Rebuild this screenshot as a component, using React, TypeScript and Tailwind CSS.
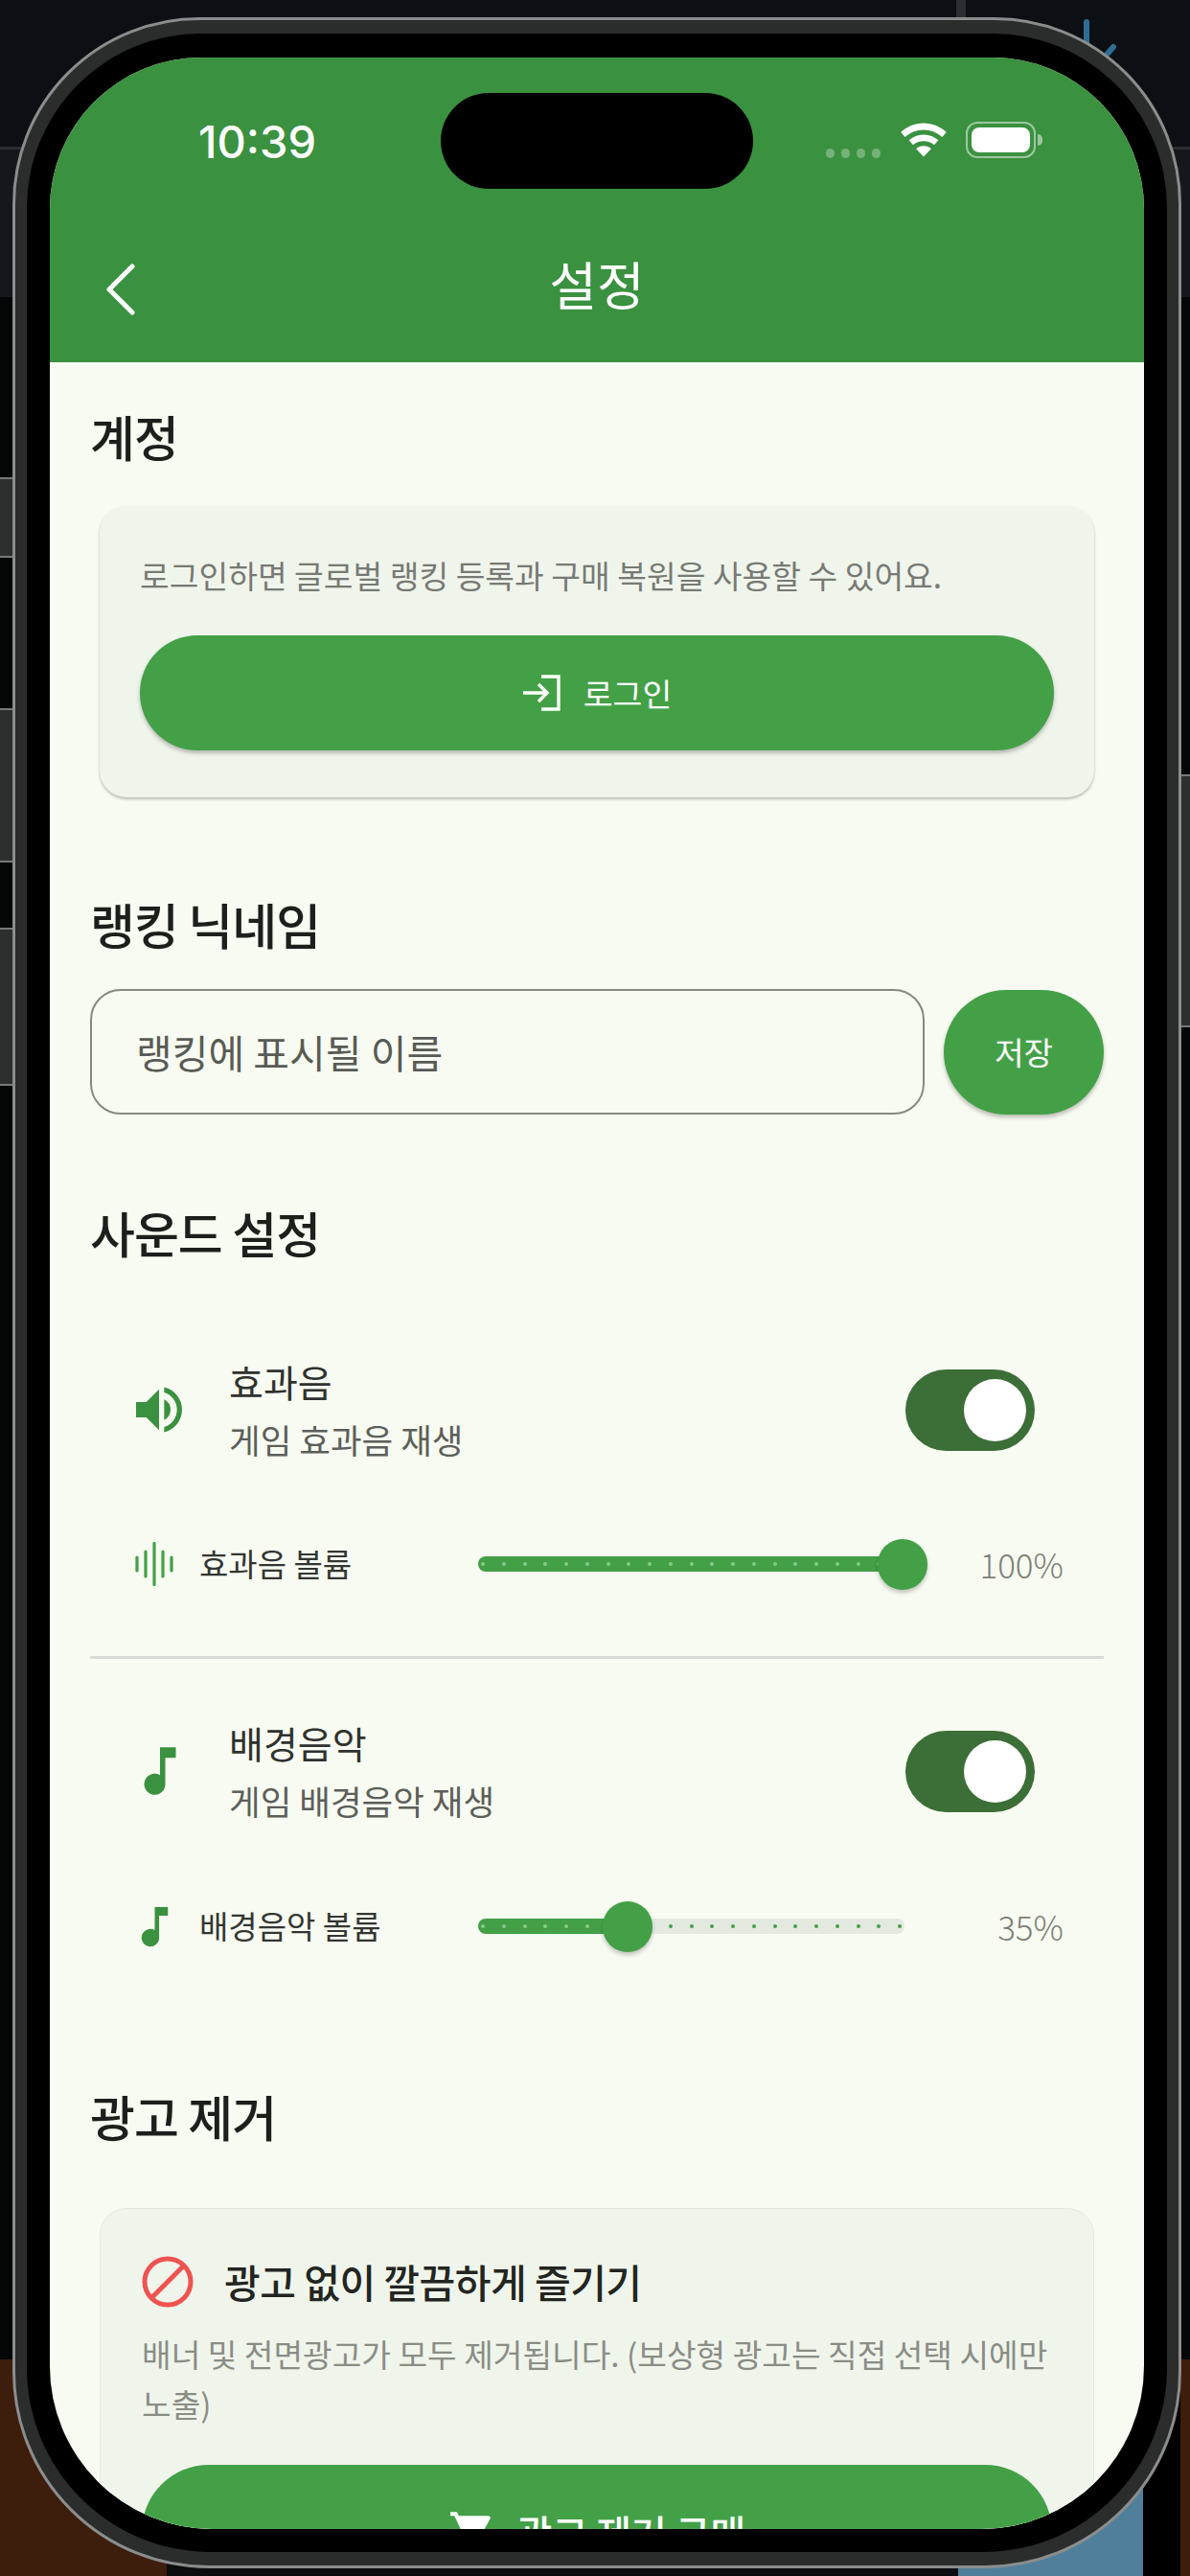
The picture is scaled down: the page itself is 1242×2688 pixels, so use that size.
import React from 'react';

const FONT = "font-['Noto_Sans_CJK_KR','Noto_Sans',sans-serif]";

const SpeakerIcon = ({ className }: { className: string }) => (
  <svg viewBox="0 0 24 24" className={className} fill="currentColor">
    <path d="M3 9v6h4l5 5V4L7 9H3zm13.500 3A4.500 4.500 0 0 0 14 7.970v8.050A4.500 4.500 0 0 0 16.500 12zM14 3.230v2.060a7 7 0 0 1 0 13.420v2.060a9 9 0 0 0 0-17.540z" />
  </svg>
);

const NoteIcon = ({ className }: { className: string }) => (
  <svg viewBox="0 0 24 24" className={className} fill="currentColor">
    <path d="M12 3v10.550A4 4 0 1 0 14 17V7h4V3h-6z" />
  </svg>
);

const WaveIcon = ({ className }: { className: string }) => (
  <svg viewBox="0 0 40 46" className={className} stroke="currentColor" strokeWidth="3.200" strokeLinecap="round">
    <path d="M2 16v14M11 10v26M20 1.500v43M29 10v26M38 16v14" />
  </svg>
);

const WifiIcon = () => (
  <svg viewBox="0 0 40 30" className="h-[38px] w-[50px]" fill="white">
    <path d="M20 1C12.500 1 6 4 1 8.500l3.500 4C8.500 9 14 6.500 20 6.500S31.500 9 35.500 12.500l3.500-4C34 4 27.500 1 20 1z" />
    <path d="M20 10.500c-4.800 0-9 1.800-12.300 4.700l3.500 4c2.300-2 5.300-3.200 8.800-3.200s6.500 1.200 8.800 3.200l3.500-4C29 12.300 24.800 10.500 20 10.500z" />
    <path d="M20 20c-2.500 0-4.700.9-6.300 2.300L20 29l6.300-6.700C24.700 20.900 22.500 20 20 20z" />
  </svg>
);

const LoginIcon = () => (
  <svg viewBox="0 0 40 38" className="h-[38px] w-[40px]" fill="none" stroke="white" strokeWidth="3.400">
    <path d="M20 2h18v34H20" />
    <path d="M1 19h25M17 10l9 9-9 9" />
  </svg>
);

const CartIcon = () => (
  <svg viewBox="0 0 24 24" className="h-[50px] w-[50px]" fill="white">
    <path d="M7 18c-1.100 0-1.990.9-1.990 2S5.900 22 7 22s2-.9 2-2-.9-2-2-2zM1 2v2h2l3.600 7.590-1.350 2.450c-.16.28-.25.61-.25.96 0 1.100.9 2 2 2h12v-2H7.420c-.14 0-.25-.11-.25-.25l.03-.12.9-1.630h7.450c.75 0 1.410-.41 1.750-1.030l3.580-6.490A1.003 1.003 0 0 0 20 4H5.210l-.94-2H1zm16 16c-1.100 0-1.990.9-1.990 2s.89 2 1.990 2 2-.9 2-2-.9-2-2-2z" />
  </svg>
);

const NoAdsIcon = () => (
  <svg viewBox="0 0 54 54" className="h-[54px] w-[54px]" fill="none" stroke="#ef5350" strokeWidth="5">
    <circle cx="27" cy="27" r="24" />
    <path d="M10 44L44 10" />
  </svg>
);

const Toggle = () => (
  <div className="flex h-[85px] w-[135px] items-center justify-end rounded-full bg-[#3c6e37] pr-[9px]">
    <div className="h-[65px] w-[65px] rounded-full bg-white" />
  </div>
);

// value is a percentage, the thumb sits on the active track
const VolumeSlider = ({ value }: { value: number }) => {
  const ticks = Array.from({ length: 21 });
  return (
    <div className="relative h-[16px] w-[445px]">
      <div className="absolute inset-x-0 top-0 h-[16px] rounded-full bg-[#e4e9e0]" />
      <div
        className="absolute left-0 top-0 h-[16px] rounded-full bg-[#43a047]"
        style={{ width: `${value}%` }}
      />
      <div className="absolute inset-x-[3px] top-[6px] flex justify-between">
        {ticks.map((_, i) => (
          <span
            key={i}
            className="h-[4px] w-[4px] rounded-full"
            style={{ backgroundColor: (i / 20) * 100 < value ? '#86c989' : '#43a047' }}
          />
        ))}
      </div>
      <div
        className="absolute top-[-18px] h-[53px] w-[52px] -translate-x-1/2 rounded-full bg-[#43a047] shadow-[0_3px_4px_rgba(0,0,0,0.22)]"
        style={{ left: `${value * 4.41 + 2}px` }}
      />
    </div>
  );
};

const SectionTitle = ({ children, className }: { children: string; className: string }) => (
  <h2 className={`text-[51px] font-medium leading-[70px] tracking-[-1px] text-[#1c1f1b] ${className}`}>{children}</h2>
);

const SoundRow = ({
  icon,
  title,
  desc,
}: {
  icon: React.ReactNode;
  title: string;
  desc: string;
}) => (
  <div className="flex h-[122px] items-center pl-[40px] pr-[72px]">
    <div className="flex w-[105px] items-center">{icon}</div>
    <div className="flex-1">
      <div className="text-[39px] leading-[62px] text-[#2f322e]">{title}</div>
      <div className="text-[35.500px] leading-[60px] text-[#5c5f5a]">{desc}</div>
    </div>
    <Toggle />
  </div>
);

const VolumeRow = ({
  icon,
  label,
  value,
}: {
  icon: React.ReactNode;
  label: string;
  value: number;
}) => (
  <div className="flex h-[70px] items-center pl-[40px]">
    <div className="flex w-[74px] items-center">{icon}</div>
    <div className="w-[291px] text-[33px] text-[#333631]">{label}</div>
    <VolumeSlider value={value} />
    <div className="flex-1 pr-[42px] text-right text-[35px] font-light text-[#7d8079]">{value}%</div>
  </div>
);

const App = () => {
  return (
    <div className={`relative h-[2688px] w-[1242px] overflow-hidden bg-[#050607] ${FONT}`}>
      {/* desktop behind the simulator */}
      <div className="absolute inset-x-0 top-0 h-[155px] bg-[#0c1014]" />
      <div className="absolute inset-x-0 top-[153px] h-[157px] border-t-[3px] border-[#2a2d30] bg-[#14181c]" />
      <div className="absolute left-[998px] top-0 h-[45px] w-[10px] bg-[#2c2f31]" />
      <svg className="absolute left-[1125px] top-[15px] h-[50px] w-[45px]" viewBox="0 0 45 50" stroke="#2f6c93" strokeWidth="6" strokeLinecap="round">
        <path d="M9 8v30M30 42l7-8" />
      </svg>
      <div className="absolute inset-x-0 bottom-0 h-[226px] bg-[#3d1d0c]" />
      <div className="absolute bottom-0 left-[174px] h-[30px] w-[840px] bg-[#0b0d0f]" />
      <div className="absolute bottom-0 left-[1000px] h-[110px] w-[194px] bg-[#4f7f9b]" />
      <div className="absolute bottom-0 left-[1193px] h-[226px] w-[39px] bg-black" />

      {/* side buttons */}
      <div className="absolute left-0 top-[498px] h-[84px] w-[15px] border-y-[2px] border-[#77797a] bg-[#2d2f2f]" />
      <div className="absolute left-0 top-[739px] h-[161px] w-[15px] border-y-[2px] border-[#77797a] bg-[#2d2f2f]" />
      <div className="absolute left-0 top-[968px] h-[165px] w-[15px] border-y-[2px] border-[#77797a] bg-[#2d2f2f]" />
      <div className="absolute right-0 top-[808px] h-[264px] w-[12px] border-y-[2px] border-[#77797a] bg-[#2d2f2f]" />

      {/* simulator bezel */}
      <div className="absolute left-[13px] top-[18px] h-[2662px] w-[1220px] rounded-t-[195px] rounded-b-[205px] border-[3px] border-[#8b8d8d] bg-[#2b2d2d] px-[12px] pb-[14px] pt-[14px]">
        <div className="h-full w-full rounded-t-[182px] rounded-b-[192px] bg-black px-[24px] pb-[24px] pt-[25px]">
          <div className="relative h-full w-full overflow-hidden rounded-t-[158px] rounded-b-[170px] bg-[#f8fbf1]">
            {/* dynamic island */}
            <div className="absolute left-[408px] top-[37px] h-[100px] w-[326px] rounded-[50px] bg-black" />

            {/* header */}
            <div className="bg-[#3a913f] text-white">
              <div className="flex h-[161px] items-start justify-between pl-[155px] pr-[106px] pt-[60px]">
                <span className="font-['Inter',sans-serif] text-[47px] font-medium leading-[56px]">10:39</span>
                <div className="mt-[7px] flex items-start">
                  <div className="mr-[20px] mt-[28px] flex gap-[7px]">
                    <span className="h-[10px] w-[9px] rounded-full bg-white/30" />
                    <span className="h-[10px] w-[9px] rounded-full bg-white/30" />
                    <span className="h-[10px] w-[9px] rounded-full bg-white/30" />
                    <span className="h-[10px] w-[9px] rounded-full bg-white/30" />
                  </div>
                  <WifiIcon />
                  <div className="ml-[19px] flex items-center">
                    <div className="flex h-[38px] w-[73px] items-center rounded-[12px] border-[2px] border-white/50 p-[4px]">
                      <div className="h-full w-full rounded-[8px] bg-white" />
                    </div>
                    <span className="ml-[2px] h-[12px] w-[5px] rounded-r-full bg-white/50" />
                  </div>
                </div>
              </div>
              <div className="flex h-[157px] items-center justify-center pb-[8px]">
                <svg viewBox="0 0 32 54" className="absolute left-[58px] h-[54px] w-[32px] translate-y-[6px]" fill="none" stroke="white" strokeWidth="5" strokeLinecap="round" strokeLinejoin="round">
                  <path d="M28 3L4 27l24 24" />
                </svg>
                <span className="text-[54px] leading-[76px]">설정</span>
              </div>
            </div>

            {/* content */}
            <div className="px-[42px]">
              <SectionTitle className="mt-[42px]">계정</SectionTitle>

              <div className="mx-[10px] mt-[38px] h-[304px] rounded-[28px] bg-[#f0f5ec] px-[42px] pt-[48px] shadow-[0_2px_3px_rgba(0,0,0,0.25)]">
                <p className="whitespace-nowrap text-[33.400px] leading-[48px] text-[#777a74]">로그인하면 글로벌 랭킹 등록과 구매 복원을 사용할 수 있어요.</p>
                <button className="mt-[39px] flex h-[120px] w-full items-center justify-center gap-[24px] rounded-full bg-[#43a047] text-white shadow-[0_3px_4px_rgba(0,0,0,0.25)]">
                  <LoginIcon />
                  <span className="text-[33.500px]">로그인</span>
                </button>
              </div>

              <SectionTitle className="mt-[97px]">랭킹 닉네임</SectionTitle>

              <div className="mt-[33px] flex items-center gap-[20px]">
                <div className="flex h-[131px] w-[871px] items-center rounded-[32px] border-[2px] border-[#858a80] px-[46px] text-[41px] text-[#585b55]">
                  랭킹에 표시될 이름
                </div>
                <button className="h-[130px] w-[167px] rounded-full bg-[#43a047] text-[33px] text-white shadow-[0_3px_4px_rgba(0,0,0,0.25)]">저장</button>
              </div>

              <SectionTitle className="mt-[88px]">사운드 설정</SectionTitle>

              <div className="mt-[89px]">
                <SoundRow
                  icon={<SpeakerIcon className="h-[64px] w-[64px] text-[#3a913f]" />}
                  title="효과음"
                  desc="게임 효과음 재생"
                />
                <div className="mt-[65px]">
                  <VolumeRow icon={<WaveIcon className="ml-[7px] h-[46px] w-[40px] text-[#43a047]" />} label="효과음 볼륨" value={100} />
                </div>
              </div>

              <div className="mt-[61px] h-[3px] bg-[#d8dbd5]" />

              <div className="mt-[56px]">
                <SoundRow
                  icon={<NoteIcon className="h-[66px] w-[66px] text-[#3a913f]" />}
                  title="배경음악"
                  desc="게임 배경음악 재생"
                />
                <div className="mt-[66px]">
                  <VolumeRow icon={<NoteIcon className="h-[55px] w-[55px] text-[#3a913f]" />} label="배경음악 볼륨" value={35} />
                </div>
              </div>

              <SectionTitle className="mt-[128px]">광고 제거</SectionTitle>

              <div className="mx-[10px] mt-[61px] h-[500px] rounded-[28px] border border-[#e4e9e0] bg-[#f0f5ec] px-[43px] pt-[47px]">
                <div className="flex h-[58px] items-center gap-[32px]">
                  <NoAdsIcon />
                  <span className="text-[41px] font-medium tracking-[-0.5px] text-[#232521]">광고 없이 깔끔하게 즐기기</span>
                </div>
                <p className="mt-[20px] break-keep text-[33.300px] leading-[52px] text-[#8a8d86]">배너 및 전면광고가 모두 제거됩니다. (보상형 광고는 직접 선택 시에만 노출)</p>
                <button className="mt-[38px] flex h-[140px] w-full items-center justify-center gap-[22px] rounded-full bg-[#43a047] text-white">
                  <CartIcon />
                  <span className="text-[40px] font-medium">광고 제거 구매</span>
                </button>
              </div>
            </div>
          </div>
        </div>
      </div>
    </div>
  );
};

export default App;
